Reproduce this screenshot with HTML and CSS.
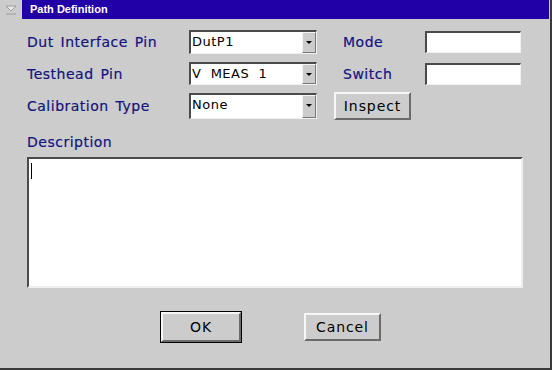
FILE: index.html
```html
<!DOCTYPE html>
<html lang="en">
<head>
    <meta charset="UTF-8">
    <title>Path Definition</title>
    <link rel="stylesheet" href="styles.css">
</head>
<body>
    <div class="window">
        <div class="titlebar">
            <span class="menu-btn">
                <svg width="16" height="12" viewBox="0 0 16 12">
                    <path d="M3 2 L13 2 L8 7 Z" fill="#e8e8e8" stroke="#9a9a9a" stroke-width="1"/>
                    <path d="M3 10 L13 10" stroke="#9a9a9a" stroke-width="1"/>
                </svg>
            </span>
            <div class="title">Path Definition</div>
        </div>
        <div class="body">
            <div class="form">
                <label class="lbl">Dut Interface Pin</label>
                <div class="combo"><span class="value">DutP1</span><span class="arrow"></span></div>
                <span></span>
                <label class="lbl lbl-side">Mode</label>
                <div class="field"></div>

                <label class="lbl">Testhead Pin</label>
                <div class="combo"><span class="value">V&nbsp;&nbsp;MEAS&nbsp;&nbsp;1</span><span class="arrow"></span></div>
                <span></span>
                <label class="lbl lbl-side">Switch</label>
                <div class="field"></div>

                <label class="lbl">Calibration Type</label>
                <div class="combo"><span class="value">None</span><span class="arrow"></span></div>
                <span></span>
                <button class="btn btn-inspect">Inspect</button>
                <span></span>
            </div>
            <label class="lbl desc-lbl">Description</label>
            <div class="desc"><span class="caret"></span></div>
            <div class="actions">
                <button class="btn btn-default">OK</button>
                <button class="btn">Cancel</button>
            </div>
        </div>
    </div>
</body>
</html>
```

FILE: styles.css
```css
html, body{
    margin: 0;
    padding: 0;
}
body{
    width: 552px;
    height: 370px;
    overflow: hidden;
    background: #cccccc;
    font-family: "DejaVu Sans", Verdana, sans-serif;
}
.window{
    width: 552px;
    height: 370px;
    box-sizing: border-box;
    background: #cccccc;
    border-right: 2px solid #3a3a3a;
    border-bottom: 2px solid #3a3a3a;
}
.titlebar{
    display: flex;
    height: 19px;
}
.menu-btn{
    width: 22px;
    display: flex;
    align-items: center;
    justify-content: center;
}
.title{
    flex: 1;
    background: #2200a8;
    color: #ffffff;
    font-family: "Liberation Sans", Arial, sans-serif;
    font-weight: bold;
    font-size: 11px;
    line-height: 19px;
    padding-left: 8px;
    margin-right: 1px;
}
.body{
    padding: 11px 0 0 27px;
}
.form{
    display: grid;
    grid-template-columns: 162px 128px 17px 91px 96px;
    grid-template-rows: 24px 23px 26px;
    row-gap: 8px;
    align-items: center;
}
.lbl{
    color: #14147e;
    font-size: 14px;
    letter-spacing: 0.5px;
    word-spacing: 2px;
    white-space: nowrap;
    -webkit-text-stroke: 0.2px #14147e;
}
.lbl-side{
    padding-left: 9px;
}
.combo{
    display: flex;
    height: 100%;
    box-sizing: border-box;
    background: #ffffff;
    border-top: 2px solid #4a4a4a;
    border-left: 2px solid #4a4a4a;
    border-bottom: 1px solid #f0f0f0;
    border-right: 1px solid #f0f0f0;
}
.combo .value{
    flex: 1;
    font-size: 13px;
    letter-spacing: 0.5px;
    line-height: 20px;
    padding-left: 1px;
    color: #000000;
}
.combo .arrow{
    width: 12px;
    background: #cccccc;
    border-left: 1px solid #f4f4f4;
    border-top: 1px solid #f4f4f4;
    border-right: 1px solid #777777;
    border-bottom: 1px solid #777777;
    position: relative;
}
.combo .arrow::after{
    content: "";
    position: absolute;
    left: 3px;
    top: 8px;
    border-left: 3px solid transparent;
    border-right: 3px solid transparent;
    border-top: 3px solid #000000;
}
.field{
    height: 22px;
    box-sizing: border-box;
    background: #ffffff;
    border-top: 2px solid #4a4a4a;
    border-left: 2px solid #4a4a4a;
    border-bottom: 1px solid #f0f0f0;
    border-right: 1px solid #f0f0f0;
}
.btn{
    font-family: "DejaVu Sans", sans-serif;
    font-size: 14px;
    letter-spacing: 0.9px;
    color: #000000;
    background: #cccccc;
    border-top: 2px solid #f6f6f6;
    border-left: 2px solid #f6f6f6;
    border-bottom: 2px solid #6a6a6a;
    border-right: 2px solid #6a6a6a;
    padding: 0;
    height: 28px;
    width: 77px;
}
.desc-lbl{
    display: block;
    margin-top: 15px;
    height: 16px;
    line-height: 16px;
}
.desc{
    margin-top: 7px;
    width: 496px;
    height: 131px;
    box-sizing: border-box;
    background: #ffffff;
    border-top: 2px solid #4a4a4a;
    border-left: 2px solid #4a4a4a;
    border-bottom: 2px solid #eeeeee;
    border-right: 2px solid #eeeeee;
    padding: 4px 0 0 2px;
}
.caret{
    display: block;
    width: 1px;
    height: 16px;
    background: #000000;
}
.actions{
    display: flex;
    gap: 63px;
    margin-top: 24px;
    padding-left: 134px;
    align-items: center;
}
.btn-default{
    width: 80px;
    height: 30px;
    outline: 1px solid #000000;
    outline-offset: 0;
}
```
